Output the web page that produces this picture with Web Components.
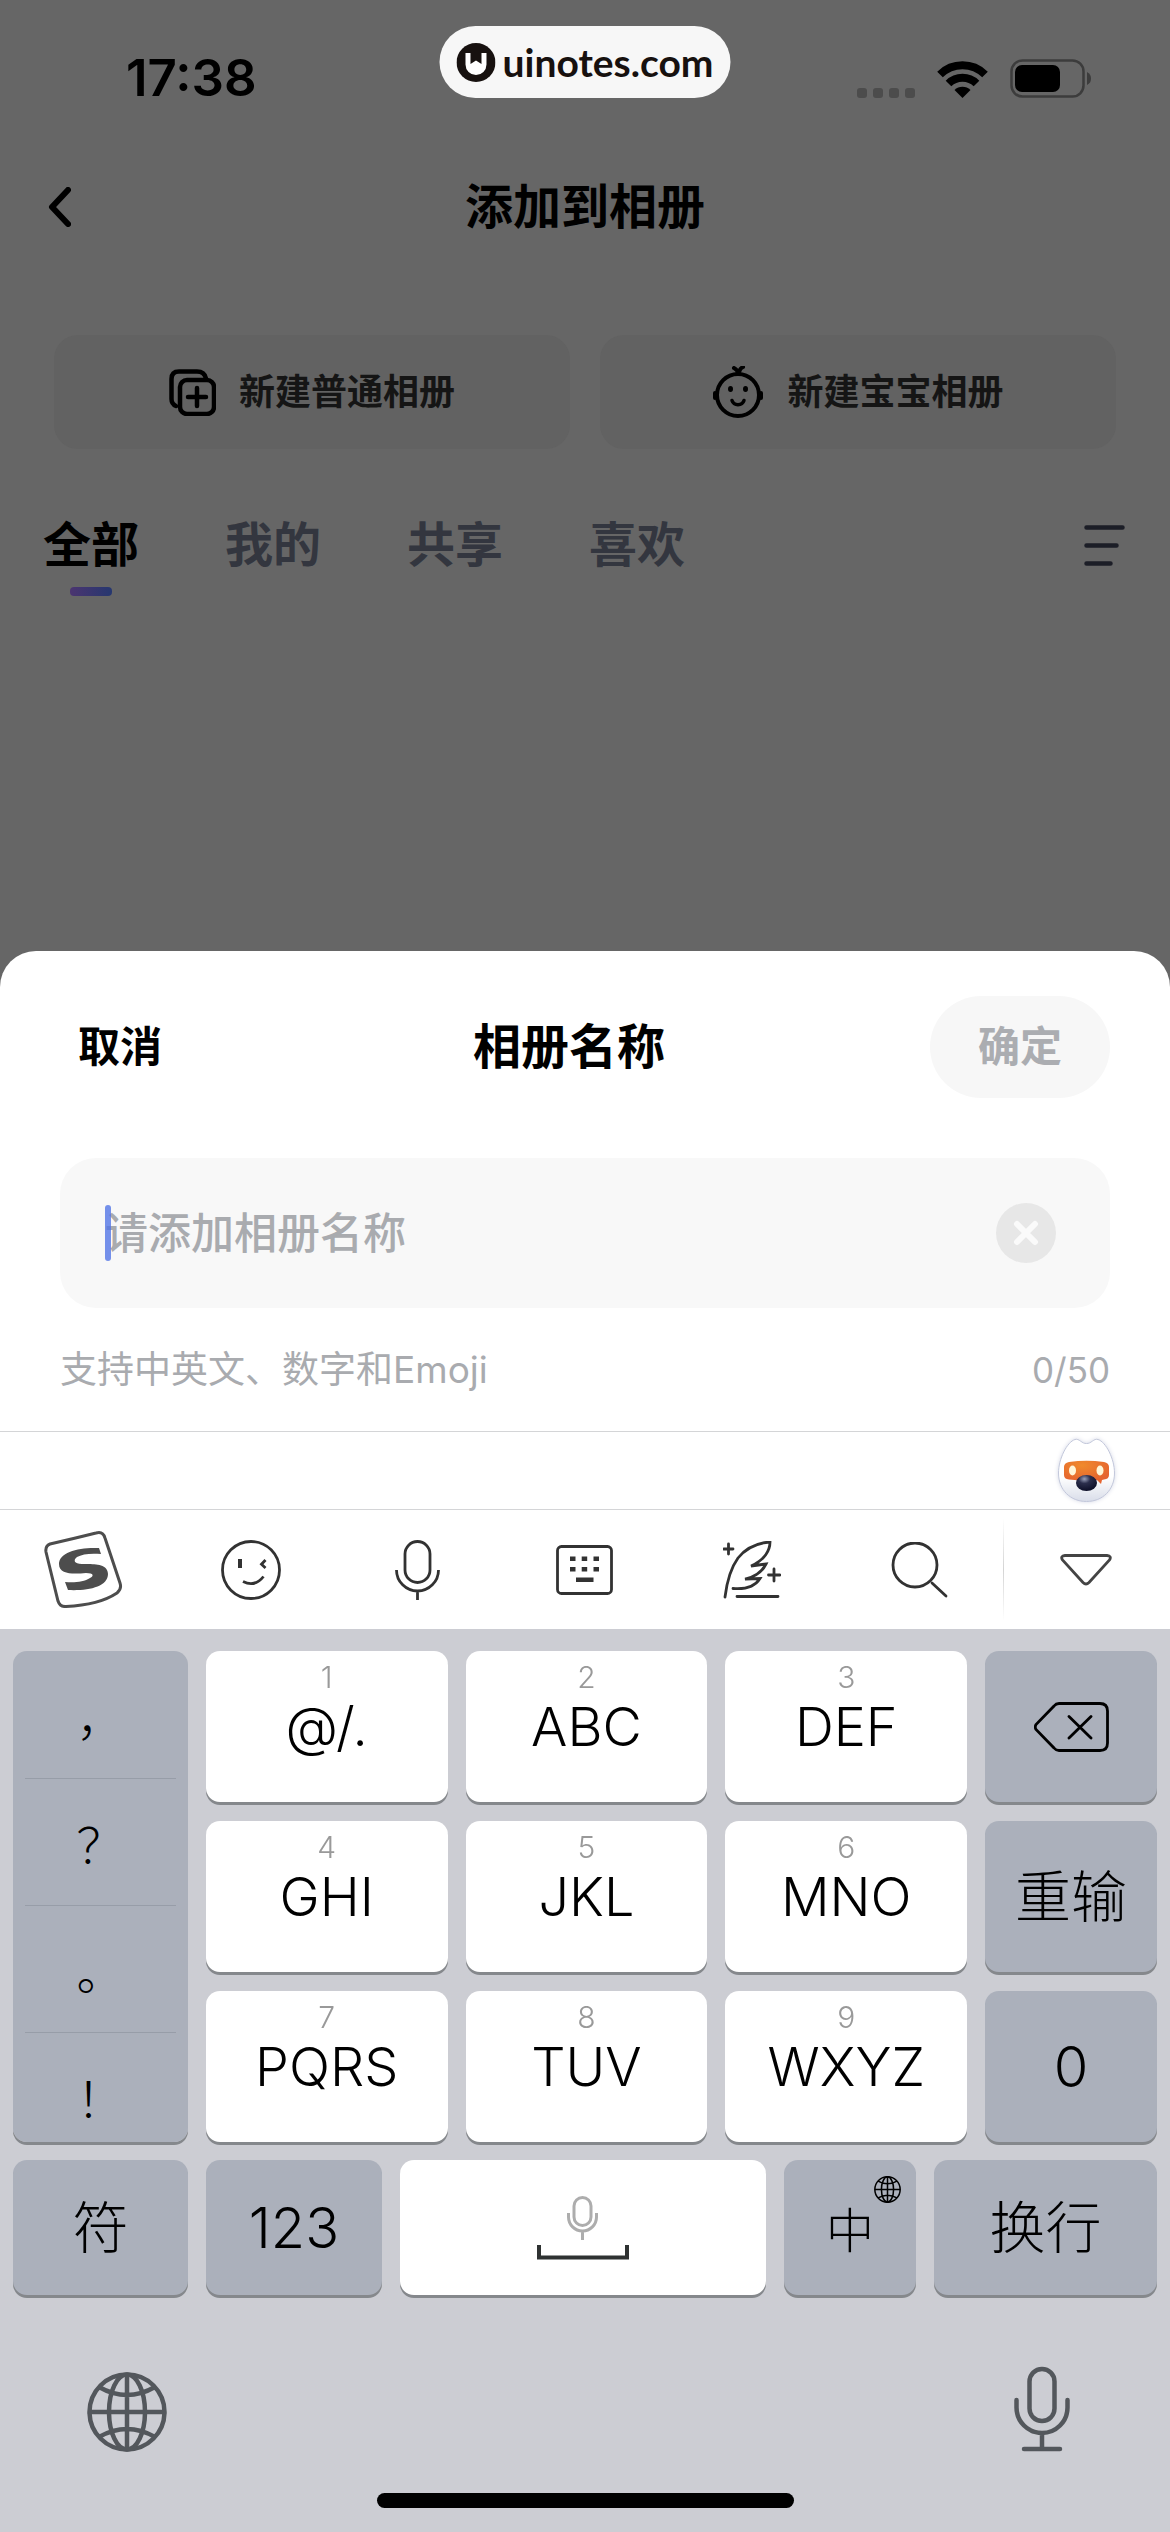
<!DOCTYPE html>
<html lang="zh-Hans">
<head>
<meta charset="utf-8">
<meta name="viewport" content="width=device-width, initial-scale=1">
<title>添加到相册</title>
<style>
  body {
    margin: 0;
    background: #666;
    color: #000;
    font-family: Inter, "Noto Sans CJK SC", sans-serif;
  }
</style>
</head>
<body>
<album-app></album-app>

<script>
const ICONS = {
  back: [23, 40, `<path d="M20 3 4 20l16 17" fill="none" stroke="currentColor" stroke-width="6" stroke-linecap="round" stroke-linejoin="round"/>`],
  brand: [39, 39, `
    <circle cx="19.5" cy="19.5" r="19.5" fill="#17110f"/>
    <path d="M9 10h5v11l5.500-3.500L25 21V10h5v11.500a10.500 10.500 0 0 1-21 0z" fill="#fff"/>`],
  dots: [58, 10, `
    <g fill="#4c4c4c">
      <rect width="10" height="10" rx="3"/><rect x="16" width="10" height="10" rx="3"/>
      <rect x="32" width="10" height="10" rx="3"/><rect x="48" width="10" height="10" rx="3"/>
    </g>`],
  wifi: [51, 37, `
    <g fill="none" stroke="currentColor" stroke-width="8">
      <path d="M3 13.500a32 32 0 0 1 45 0"/><path d="M11.500 22.500a20 20 0 0 1 28 0"/>
    </g>
    <path d="M25.500 37 17.500 29a11.500 11.500 0 0 1 16 0z"/>`],
  battery: [81, 39, `
    <rect x="1.500" y="1.500" width="72" height="36" rx="11" fill="none" stroke="#3c3c3c" stroke-width="2.500"/>
    <rect x="5" y="6" width="45" height="27" rx="7"/>
    <path d="M77 13q4 2 4 6.500t-4 6.500z" fill="#3c3c3c"/>`],
  album: [47, 47, `
    <g fill="none" stroke="currentColor" stroke-width="4.500" stroke-linecap="round">
      <path d="M7 37Q2.500 35 2.500 30V10q0-7.500 7.500-7.500h18q7.500 0 9 7"/>
      <rect x="11" y="11" width="34" height="34" rx="7"/>
      <path d="M28 19v18M19 28h18"/>
    </g>`],
  baby: [52, 52, `
    <g fill="none" stroke="currentColor" stroke-width="4" stroke-linecap="round">
      <circle cx="26" cy="29" r="21"/>
      <path d="M26 8q0-4-4-6M27 8q0-5 4-7"/>
      <path d="M20 34.500a6.300 6 0 0 0 12 0" stroke-width="3.500"/>
      <path d="M3 27v5M49 27v5"/>
    </g>
    <ellipse cx="18.500" cy="23" rx="2.500" ry="3"/><ellipse cx="33.500" cy="23" rx="2.500" ry="3"/>`],
  filter: [41, 41, `<path d="M2.500 2.500h36M2.500 20.500h30M2.500 38.500h24" stroke="#1c1e27" stroke-width="4.500" stroke-linecap="round"/>`],
  clear: [60, 60, `
    <circle cx="30" cy="30" r="30" fill="#e7e7e7"/>
    <path d="m21 21 18 18M39 21 21 39" stroke="#fafafa" stroke-width="6" stroke-linecap="round"/>`],
  dog: [65, 71, `
    <defs>
      <linearGradient id="head" x1="0" y1="0" x2="0" y2="1">
        <stop offset=".6" stop-color="#fff"/><stop offset="1" stop-color="#d9dde9"/>
      </linearGradient>
      <radialGradient id="visor" cx=".4" cy=".2" r=".7">
        <stop offset="0" stop-color="#f08a2c"/><stop offset="1" stop-color="#e5642f"/>
      </radialGradient>
      <radialGradient id="nose" cx=".4" cy=".25" r=".7">
        <stop offset="0" stop-color="#9aa0ba"/><stop offset=".4" stop-color="#2b2e4c"/><stop offset="1" stop-color="#10122b"/>
      </radialGradient>
    </defs>
    <g transform="translate(4 4)">
      <path d="M28.500 4.500C24 5 21-1 17 .500 9 3 .500 20 .500 34c0 17 12 28.500 28 28.500s28-11.500 28-28.500C56.500 20 48 3 40 .500 36-1 33 5 28.500 4.500z" fill="url(#head)" stroke="#c3c8db" style="filter: drop-shadow(0 0 2px #d5d8e6)"/>
      <path d="M11 23q17.500-2.500 35 0 5 1 5 5v8q0 4-5 4.500l-2 .500-1 4-4-4q-14 1-28-.500-5-.500-5-4.500v-8q0-4 5-5z" fill="url(#visor)"/>
      <ellipse cx="14.500" cy="31.500" rx="3.500" ry="5" fill="#fff6d8"/><ellipse cx="42" cy="31.500" rx="3.500" ry="5" fill="#fff6d8"/>
      <ellipse cx="28.500" cy="44" rx="10.500" ry="8" fill="url(#nose)"/>
    </g>`],
  sogou: [79, 77, `
    <path d="M6 13Q28 8 52 2q7-2 9 5l15 45q2 6-3 10-18 12-51 13.500-6 .500-8-5.500L2 21q-1-6 4-8z" fill="none" stroke="#4d4d4d" stroke-width="3"/>
    <path d="M55 17C35 16 15 21 15 33c0 11 15 10 27 9 8 0 8 3 4 5-6 4-16 5-25 4l3 8c20 1 40-3 40-16 0-11-16-10-26-10-8 0-9-4-5-7 5-3 14-4 24-3z" fill="#4d4d4d"/>`],
  face: [60, 60, `
    <g fill="none" stroke="#323232" stroke-width="2.800">
      <circle cx="30" cy="30" r="28.500"/>
      <path d="m44.500 20-4 4.300 4 3.700M22 41.500q12 6 20.500-5"/>
    </g>
    <path d="M17 19h4v9h-4z" fill="#323232"/>`],
  mic: [45, 60, `
    <g fill="none" stroke="#323232" stroke-width="2.800">
      <rect x="10" y="1.500" width="25" height="41" rx="12.500"/>
      <path d="M1.500 30a21 21 0 0 0 42 0M22.500 51v9"/>
    </g>`],
  keyboard: [57, 50, `
    <rect x="1.500" y="1.500" width="54" height="47" rx="4" fill="none" stroke="#323232" stroke-width="2.800"/>
    <path d="M14 11.500h5.500V16H14zM25.700 11.500h5.500V16h-5.500zM37.500 11.500H43V16h-5.500zM14 22h5.500v4.500H14zM25.700 22h5.500v4.500h-5.500zM37.500 22H43v4.500h-5.500zM20 32.500h17.500V37H20z" fill="#323232"/>`],
  quill: [58, 58, `
    <g fill="none" stroke="#323232" stroke-width="2.800" stroke-linecap="round">
      <path d="M2 56C4 40 7 28 15 17 23 7 34 2 47 1c0 8-5 18-19 24l15-2c-4 8-11 13-21 15l15-.500c-5 8-15 11-27 10"/>
      <path d="M14 55.500h41M5.500 3v10M.800 8H10M51 28v12M45.500 34H57"/>
    </g>`],
  search: [57, 56, `
    <g fill="none" stroke="#323232" stroke-width="2.800" stroke-linecap="round">
      <circle cx="24" cy="23" r="22"/><path d="m41 41 14 13"/>
    </g>`],
  collapse: [52, 32, `<path d="M5 1.500h42q5 .500 2.500 4.500L29 28.500q-3 3-6 0L2.500 6Q0 2 5 1.500z" fill="none" stroke="#444" stroke-width="2.800"/>`],
  backspace: [75, 50, `
    <path d="M25 1.500h41q7.500 0 7.500 7.500v32q0 7.500-7.500 7.500H25q-3 0-5-2.500L2 27.500Q.500 25 2 22.500L20 4q2-2.500 5-2.500zM35 14.500l22 21.500M57 14.500 35 36" fill="none" stroke="currentColor" stroke-width="2.800" stroke-linecap="round"/>`],
  space: [92, 64, `
    <g fill="none" stroke="#adadad" stroke-width="3">
      <rect x="37" y="1.500" width="17" height="28" rx="8.500"/>
      <path d="M31.500 17v4a14 14 0 0 0 28 0v-4M45.500 35v9"/>
    </g>
    <path d="M2 49v12.500h88V49" fill="none" stroke="#2f3232" stroke-width="4"/>`],
  globe: [80, 80, `
    <g fill="none" stroke="currentColor" stroke-width="4.500">
      <circle cx="40" cy="40" r="37.500"/><ellipse cx="40" cy="40" rx="18" ry="37.500"/>
      <path d="M40 2v76M2 40h76M12 15q28 16 56 0M12 65q28-16 56 0"/>
    </g>`],
  dictate: [56, 86, `
    <g fill="none" stroke="currentColor" stroke-width="4.500" stroke-linecap="round">
      <rect x="15.500" y="3" width="25" height="52" rx="12.500"/>
      <path d="M2.500 34v7.500a25.500 25.500 0 0 0 51 0V34M28 68v14M10 83h36"/>
    </g>`]
};

class SvgIcon extends HTMLElement {
  connectedCallback() {
    const [width, height, shape] = ICONS[this.getAttribute('name')];
    const size = Number(this.getAttribute('size')) || width;
    this.attachShadow({ mode: 'open' }).innerHTML = `
      <style>
        :host { display: block; flex: none; }
        svg { display: block; }
      </style>
      <svg width="${size}" height="${size * height / width}" viewBox="0 0 ${width} ${height}" aria-hidden="true">${shape}</svg>
    `;
  }
}

class StatusBar extends HTMLElement {
  constructor() {
    super();
    this.attachShadow({ mode: 'open' });
    this.shadowRoot.innerHTML = `
      <style>
        :host {
          display: flex;
          position: relative;
          align-items: center;
          justify-content: space-between;
          height: 156px;
          padding: 0 79px 0 126px;
        }
        time { font-size: 51px; font-weight: 600; line-height: 60px; }
        .signals { display: flex; align-items: flex-end; gap: 22px; }
        .pill {
          position: absolute;
          top: 26px;
          left: 50%;
          transform: translateX(-50%);
          display: flex;
          align-items: center;
          gap: 7px;
          box-sizing: border-box;
          height: 72px;
          padding: 0 17px;
          border-radius: 36px;
          background: #f7f7f7;
          color: #17110f;
          font: 700 39px/50px Lato, sans-serif;
        }
      </style>
      <time>17:38</time>
      <div class="pill"><svg-icon name="brand"></svg-icon><span>uinotes.com</span></div>
      <div class="signals">
        <svg-icon name="dots"></svg-icon>
        <svg-icon name="wifi"></svg-icon>
        <svg-icon name="battery"></svg-icon>
      </div>
    `;
  }
}

class NavBar extends HTMLElement {
  constructor() {
    super();
    this.attachShadow({ mode: 'open' });
    this.shadowRoot.innerHTML = `
      <style>
        :host {
          display: grid;
          grid-template-columns: 1fr auto 1fr;
          align-items: center;
          height: 102px;
          padding: 0 48px;
        }
        button { justify-self: start; padding: 0; border: 0; background: none; color: inherit; }
        h1 { margin: 0; font-size: 48px; font-weight: 600; line-height: 60px; }
      </style>
      <button type="button" aria-label="返回"><svg-icon name="back"></svg-icon></button>
      <h1><slot></slot></h1>
    `;
  }
}

class AlbumAction extends HTMLElement {
  connectedCallback() {
    this.attachShadow({ mode: 'open' }).innerHTML = `
      <style>
        :host { display: block; flex: 1; }
        button {
          display: flex;
          align-items: center;
          justify-content: center;
          gap: 23px;
          width: 100%;
          height: 114px;
          padding: 0;
          border: 0;
          border-radius: 24px;
          background: #626262;
          color: #000;
          font: inherit;
          font-size: 36px;
          font-weight: 600;
          line-height: 50px;
        }
        span { color: #151515; }
      </style>
      <button type="button">
        <svg-icon name="${this.getAttribute('icon')}"></svg-icon>
        <span><slot></slot></span>
      </button>
    `;
  }
}

class AlbumTabs extends HTMLElement {
  constructor() {
    super();
    this.attachShadow({ mode: 'open' });
    this.shadowRoot.innerHTML = `
      <style>
        :host { display: flex; align-items: flex-start; justify-content: space-between; padding: 0 45px 0 43px; }
        .tabs { display: flex; align-items: flex-start; gap: 86px; }
        button { padding: 0; border: 0; background: none; font: inherit; }
        .tab { color: #33363f; font-size: 48px; font-weight: 600; line-height: 60px; }
        .tab[aria-selected="true"] { color: #000; }
        .tab[aria-selected="true"]::after {
          content: "";
          display: block;
          width: 42px;
          height: 9px;
          margin: 12px auto 0;
          border-radius: 4px;
          background: linear-gradient(90deg, #4b3570, #26376f);
        }
        .filter { padding: 10px 0; }
      </style>
      <div class="tabs" role="tablist">
        <button class="tab" role="tab" aria-selected="true">全部</button>
        <button class="tab" role="tab" aria-selected="false">我的</button>
        <button class="tab" role="tab" aria-selected="false">共享</button>
        <button class="tab" role="tab" aria-selected="false">喜欢</button>
      </div>
      <button class="filter" type="button" aria-label="排序"><svg-icon name="filter"></svg-icon></button>
    `;
    const tabs = this.shadowRoot.querySelectorAll('.tab');
    tabs.forEach(tab => tab.addEventListener('click', () => {
      tabs.forEach(t => t.setAttribute('aria-selected', t === tab));
    }));
  }
}

class NameSheet extends HTMLElement {
  constructor() {
    super();
    this.attachShadow({ mode: 'open' });
    this.shadowRoot.innerHTML = `
      <style>
        :host {
          display: block;
          padding: 45px 60px 36px;
          border-radius: 36px 36px 0 0;
          background: #fff;
        }
        header { display: flex; align-items: center; justify-content: space-between; }
        button {
          border: 0;
          background: none;
          color: inherit;
          font: inherit;
          font-size: 42px;
          font-weight: 600;
          line-height: 60px;
        }
        .cancel { width: 148px; padding: 0 18px; text-align: left; }
        .confirm { width: 180px; height: 102px; padding: 0; border-radius: 51px; background: #f7f7f7; color: #abadb1; }
        label { font-size: 48px; font-weight: 600; line-height: 60px; }
        .field {
          display: flex;
          align-items: center;
          height: 150px;
          margin-top: 60px;
          padding: 0 54px 0 45px;
          border-radius: 36px;
          background: #f8f8f8;
        }
        .entry { position: relative; flex: 1; }
        input {
          box-sizing: border-box;
          width: 100%;
          height: 60px;
          padding: 0;
          border: 0;
          outline: 0;
          background: none;
          color: #000;
          font: inherit;
          font-size: 43px;
          font-weight: 500;
        }
        input::placeholder { color: #a9abaf; opacity: 1; }
        .caret {
          position: absolute;
          top: 2px;
          left: 0;
          width: 6px;
          height: 56px;
          border-radius: 3px;
          background: rgba(82, 118, 230, .8);
        }
        .caret[hidden] { display: none; }
        .clear { padding: 0; }
        .hint {
          display: flex;
          justify-content: space-between;
          margin-top: 37px;
          color: #a9abaf;
          font-size: 37px;
          line-height: 50px;
        }
        .count { font-size: 35px; }
      </style>
      <header>
        <button class="cancel" type="button">取消</button>
        <label for="name">相册名称</label>
        <button class="confirm" type="button">确定</button>
      </header>
      <div class="field">
        <div class="entry">
          <input id="name" type="text" maxlength="50" placeholder="请添加相册名称">
          <span class="caret"></span>
        </div>
        <button class="clear" type="button" aria-label="清除"><svg-icon name="clear"></svg-icon></button>
      </div>
      <div class="hint"><span>支持中英文、数字和Emoji</span><span class="count">0/50</span></div>
    `;
    const input = this.shadowRoot.querySelector('input');
    const update = () => {
      this.shadowRoot.querySelector('.count').textContent = `${input.value.length}/50`;
      this.shadowRoot.querySelector('.caret').hidden = input.value.length > 0;
    };
    input.addEventListener('input', update);
    this.shadowRoot.querySelector('.clear').addEventListener('click', () => {
      input.value = '';
      update();
    });
  }
}

class KeyboardToolbar extends HTMLElement {
  constructor() {
    super();
    this.attachShadow({ mode: 'open' });
    this.shadowRoot.innerHTML = `
      <style>
        :host { display: block; background: #fff; border-top: 1px solid #d4d5d7; }
        .assistant {
          display: flex;
          align-items: center;
          justify-content: flex-end;
          height: 77px;
          padding-right: 51px;
          border-bottom: 1px solid #d4d5d7;
        }
        .tools { display: grid; grid-template-columns: repeat(7, 1fr); height: 119px; }
        button { display: grid; place-items: center; padding: 0; border: 0; background: none; }
        .collapse {
          background: linear-gradient(#fff, #d4d4d4 50%, #fff) left / 1px 103px no-repeat;
        }
      </style>
      <div class="assistant">
        <button type="button" aria-label="助手"><svg-icon name="dog"></svg-icon></button>
      </div>
      <div class="tools">
        <button type="button" aria-label="搜狗"><svg-icon name="sogou"></svg-icon></button>
        <button type="button" aria-label="表情"><svg-icon name="face"></svg-icon></button>
        <button type="button" aria-label="语音"><svg-icon name="mic"></svg-icon></button>
        <button type="button" aria-label="键盘"><svg-icon name="keyboard"></svg-icon></button>
        <button type="button" aria-label="写作"><svg-icon name="quill"></svg-icon></button>
        <button type="button" aria-label="搜索"><svg-icon name="search"></svg-icon></button>
        <button class="collapse" type="button" aria-label="收起"><svg-icon name="collapse"></svg-icon></button>
      </div>
    `;
  }
}

class KeyCap extends HTMLElement {
  connectedCallback() {
    const hint = this.getAttribute('hint');
    const label = this.getAttribute('label');
    this.attachShadow({ mode: 'open' }).innerHTML = `
      <style>
        :host { display: block; }
        button {
          display: flex;
          position: relative;
          flex-direction: column;
          align-items: center;
          justify-content: center;
          width: 100%;
          height: 100%;
          padding: 0;
          border: 0;
          border-radius: 14px;
          background: #fff;
          box-shadow: 0 3px 0 #85888c;
          color: #000;
          font: inherit;
          font-size: 56px;
          font-weight: 300;
          line-height: 70px;
        }
        :host([dark]) button { background: #abb0bb; }
        :host([hint]) button { justify-content: flex-start; padding-top: 11px; font-size: 54px; }
        :host([small]) button { font-size: 48px; padding-top: 6px; }
        .hint { color: #999; font-size: 30px; line-height: 30px; }
        ::slotted([slot="badge"]) { position: absolute; top: 16px; right: 15px; }
      </style>
      <button type="button"${label ? ` aria-label="${label}"` : ''}>
        ${hint ? `<span class="hint">${hint}</span>` : ''}
        <slot></slot>
        <slot name="badge"></slot>
      </button>
    `;
  }
}

class KeyPad extends HTMLElement {
  constructor() {
    super();
    this.attachShadow({ mode: 'open' });
    this.shadowRoot.innerHTML = `
      <style>
        :host { display: grid; gap: 18px; padding: 22px 13px 0; }
        .main {
          display: grid;
          grid-template-columns: 175fr 242fr 242fr 242fr 172fr;
          grid-auto-rows: 151px;
          gap: 19px 18px;
        }
        .bottom {
          display: grid;
          grid-template-columns: 175fr 176fr 366fr 132fr 223fr;
          grid-auto-rows: 135px;
          gap: 18px;
        }
        /* the list is a little taller than its column and scrolls */
        .marks {
          display: grid;
          grid-row: span 3;
          grid-auto-rows: 127px;
          overflow-y: auto;
          scrollbar-width: none;
          padding: 0 12px;
          border-radius: 14px;
          background: #abb0bb;
          box-shadow: 0 3px 0 #85888c;
        }
        .marks button {
          padding: 0;
          border: 0;
          background: none;
          color: #000;
          font: 300 48px "Noto Sans CJK SC", sans-serif;
        }
        .marks button + button { border-top: 1px solid #979da8; }
      </style>
      <div class="main">
        <div class="marks">
          <button type="button">，</button>
          <button type="button">？</button>
          <button type="button">。</button>
          <button type="button">！</button>
        </div>
        <key-cap hint="1">@/.</key-cap>
        <key-cap hint="2">ABC</key-cap>
        <key-cap hint="3">DEF</key-cap>
        <key-cap dark label="删除"><svg-icon name="backspace"></svg-icon></key-cap>
        <key-cap hint="4">GHI</key-cap>
        <key-cap hint="5">JKL</key-cap>
        <key-cap hint="6">MNO</key-cap>
        <key-cap dark>重输</key-cap>
        <key-cap hint="7">PQRS</key-cap>
        <key-cap hint="8">TUV</key-cap>
        <key-cap hint="9">WXYZ</key-cap>
        <key-cap dark>0</key-cap>
      </div>
      <div class="bottom">
        <key-cap dark>符</key-cap>
        <key-cap dark>123</key-cap>
        <key-cap label="空格"><svg-icon name="space"></svg-icon></key-cap>
        <key-cap dark small>中<svg-icon slot="badge" name="globe" size="27"></svg-icon></key-cap>
        <key-cap dark>换行</key-cap>
      </div>
    `;
  }
}

class KeyboardDock extends HTMLElement {
  constructor() {
    super();
    this.attachShadow({ mode: 'open' });
    this.shadowRoot.innerHTML = `
      <style>
        :host { display: block; padding: 71px 0 24px; color: #53575c; }
        .row { display: flex; align-items: flex-end; justify-content: space-between; padding: 0 100px 0 87px; }
        button { padding: 0; border: 0; background: none; color: inherit; }
        .home { width: 417px; height: 15px; margin: 41px auto 0; border-radius: 8px; background: #000; }
      </style>
      <div class="row">
        <button type="button" aria-label="切换键盘"><svg-icon name="globe"></svg-icon></button>
        <button type="button" aria-label="听写"><svg-icon name="dictate"></svg-icon></button>
      </div>
      <div class="home"></div>
    `;
  }
}

class AlbumApp extends HTMLElement {
  constructor() {
    super();
    this.attachShadow({ mode: 'open' });
    this.shadowRoot.innerHTML = `
      <style>
        :host { display: flex; flex-direction: column; min-height: 100vh; }
        main { flex: 1; }
        .actions { display: flex; gap: 30px; padding: 77px 54px 66px; }
        .keyboard { background: #cccdd3; }
      </style>
      <main>
        <status-bar></status-bar>
        <nav-bar>添加到相册</nav-bar>
        <div class="actions">
          <album-action icon="album">新建普通相册</album-action>
          <album-action icon="baby">新建宝宝相册</album-action>
        </div>
        <album-tabs></album-tabs>
      </main>
      <name-sheet></name-sheet>
      <div class="keyboard">
        <keyboard-toolbar></keyboard-toolbar>
        <key-pad></key-pad>
        <keyboard-dock></keyboard-dock>
      </div>
    `;
  }
}

customElements.define('svg-icon', SvgIcon);
customElements.define('status-bar', StatusBar);
customElements.define('nav-bar', NavBar);
customElements.define('album-action', AlbumAction);
customElements.define('album-tabs', AlbumTabs);
customElements.define('name-sheet', NameSheet);
customElements.define('keyboard-toolbar', KeyboardToolbar);
customElements.define('key-cap', KeyCap);
customElements.define('key-pad', KeyPad);
customElements.define('keyboard-dock', KeyboardDock);
customElements.define('album-app', AlbumApp);
</script>
</body>
</html>
